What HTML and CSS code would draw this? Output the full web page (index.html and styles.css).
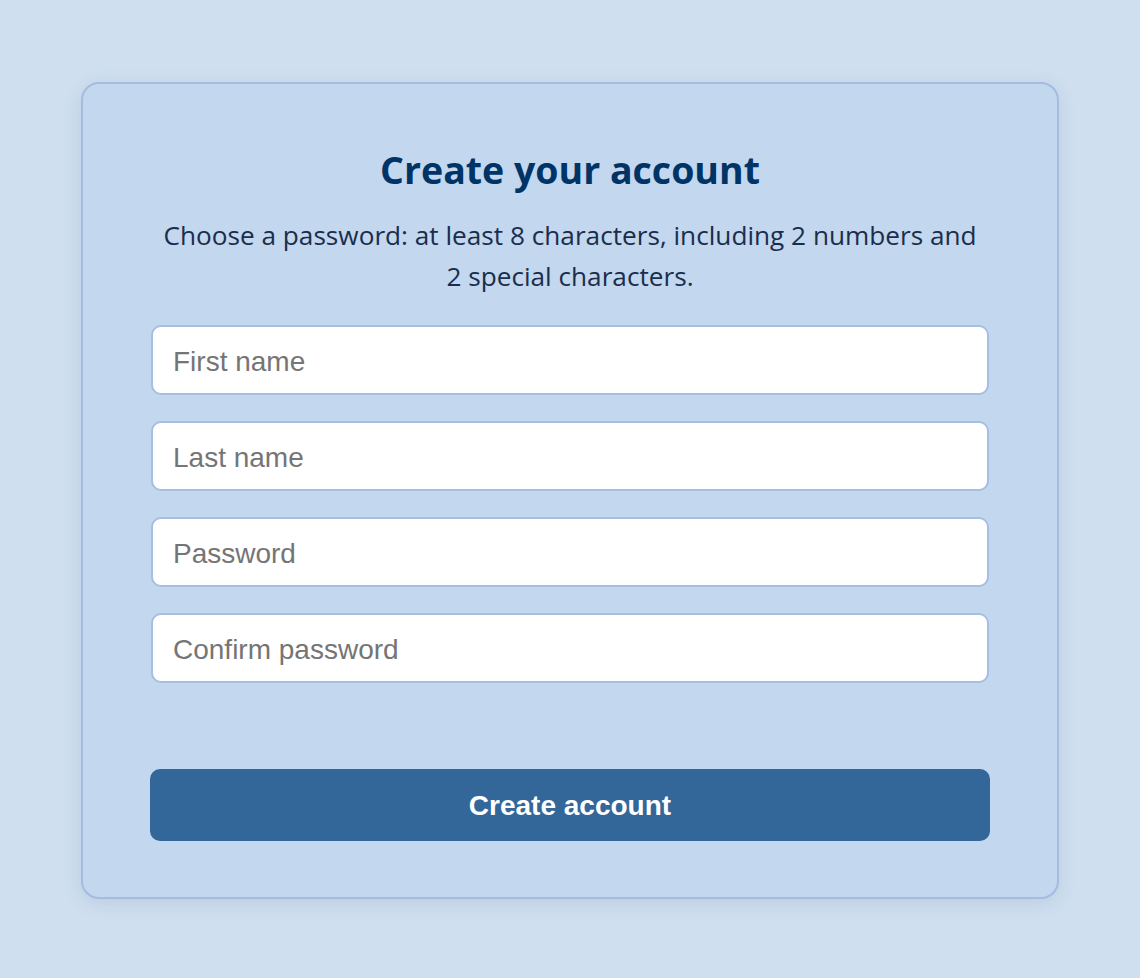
FILE: index.html
```html
<!DOCTYPE html>
<html lang="en">
<head>
<meta charset="utf-8">
<title>Create your account</title>
<link rel="stylesheet" href="styles.css">
</head>
<body>
<main class="card">
  <h1 class="title">Create your account</h1>
  <p class="hint">Choose a password: at least 8 characters, including 2 numbers and 2 special characters.</p>
  <form class="form">
    <div class="fields">
      <input class="field" type="text" placeholder="First name">
      <input class="field" type="text" placeholder="Last name">
      <input class="field" type="password" placeholder="Password">
      <input class="field" type="password" placeholder="Confirm password">
    </div>
    <button class="submit" type="button">Create account</button>
  </form>
</main>
</body>
</html>
```

FILE: styles.css
```css
html, body {
  margin: 0;
  padding: 0;
}
body {
  background: #cfdff0;
  min-height: 978px;
  box-sizing: border-box;
  padding: 82px 0 80px;
  display: flex;
  justify-content: center;
  align-items: flex-start;
  font-family: "Open Sans", "Noto Sans", sans-serif;
}
.card {
  width: 978px;
  box-sizing: border-box;
  background: #c3d7ef;
  border: 2px solid #a3bde1;
  border-radius: 18px;
  box-shadow: 0 4px 18px rgba(40, 70, 110, 0.12);
  padding: 62px 67px 56px;
  display: flex;
  flex-direction: column;
  align-items: center;
}
.title {
  margin: 0;
  font-size: 37.5px;
  line-height: 48px;
  font-weight: 700;
  color: #003366;
  text-align: center;
}
.hint {
  margin: 21px 0 0;
  width: 824px;
  font-size: 26.2px;
  line-height: 41px;
  color: #1a2e4c;
  text-align: center;
}
.form {
  margin-top: 28px;
  width: 840px;
  display: flex;
  flex-direction: column;
}
.fields {
  display: flex;
  flex-direction: column;
  gap: 26px;
  padding: 0 1px;
}
.field {
  height: 70px;
  box-sizing: border-box;
  border: 2px solid #a6bfe0;
  border-radius: 10px;
  background: #ffffff;
  padding: 4px 20px 0;
  font-family: "Liberation Sans", Arial, sans-serif;
  font-size: 28px;
  color: #222;
  outline: none;
}
.field::placeholder {
  color: #757575;
}
.submit {
  margin-top: 86px;
  height: 72px;
  border: none;
  border-radius: 10px;
  background: #336699;
  color: #ffffff;
  padding: 2px 0 0;
  font-family: "Liberation Sans", Arial, sans-serif;
  font-size: 28px;
  font-weight: 700;
  cursor: pointer;
}
```
